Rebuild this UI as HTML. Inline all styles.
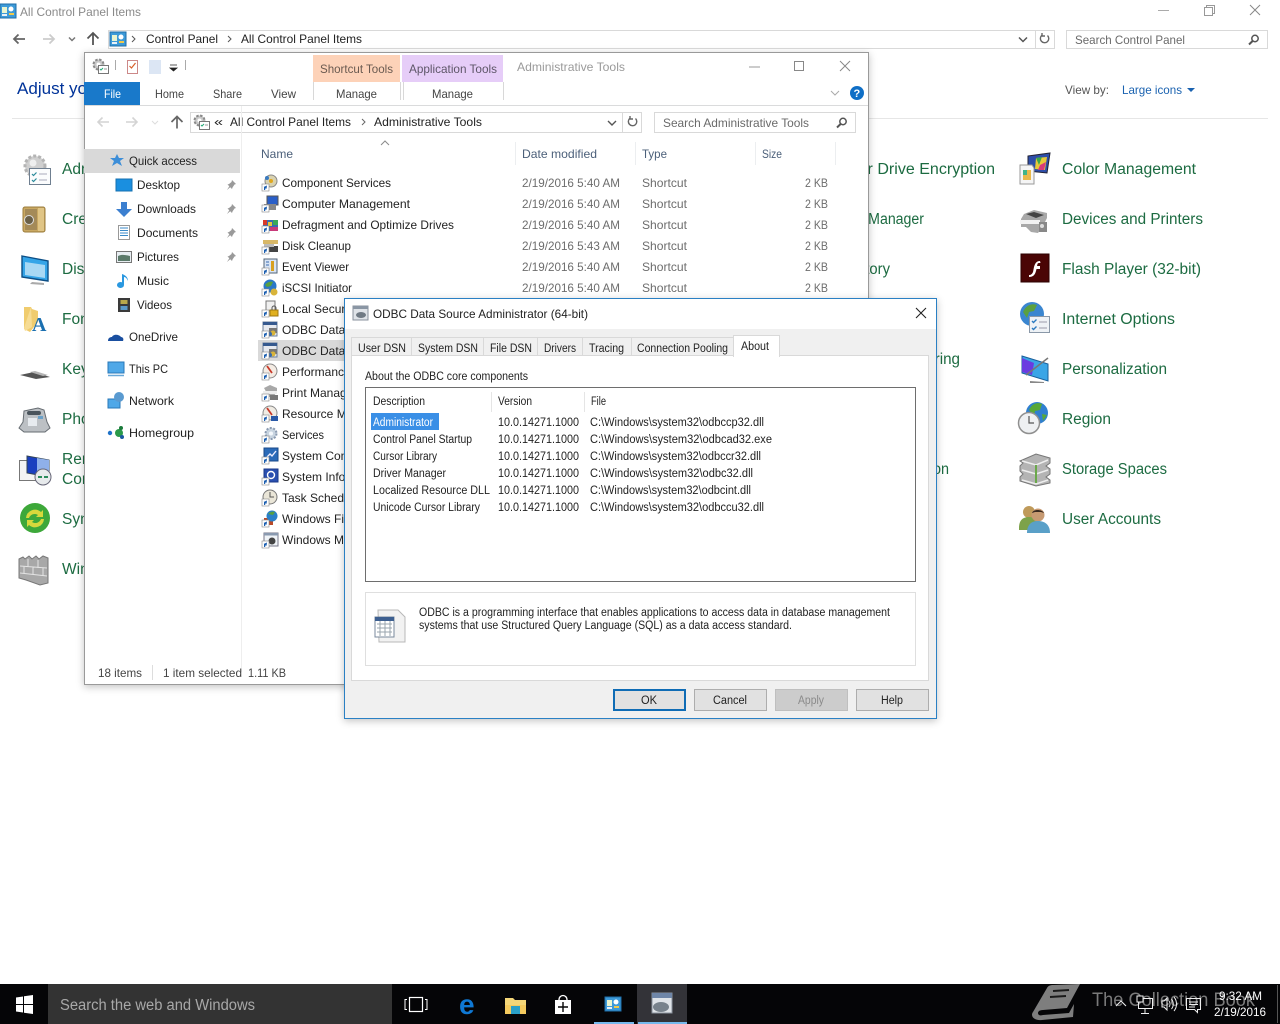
<!DOCTYPE html>
<html lang="en"><head><meta charset="utf-8"><title>ODBC Data Source Administrator</title>
<style>
html,body{margin:0;padding:0;background:#fff;width:1280px;height:1024px;overflow:hidden}
svg{display:block}
text{font-family:"Liberation Sans",Arial,sans-serif;font-size:12px;fill:#333;white-space:pre}
.l{font-size:15.5px;fill:#1c6b41}
.g{fill:#6d6d6d}
.m{font-size:12px;fill:#444}
.d{font-size:11.5px;fill:#222}
.n{fill:#222}
.h{fill:#4c607a}
.t{fill:#6a6a6a}
</style></head><body>
<svg width="1280" height="1024" viewBox="0 0 1280 1024" xmlns="http://www.w3.org/2000/svg">
<defs>
<filter id="s" x="-5%" y="-5%" width="110%" height="110%"><feDropShadow dx="0" dy="2" stdDeviation="4" flood-color="#000" flood-opacity=".24"/></filter>
<g id="sc"><rect x="0" y="9" width="7" height="7" fill="#fff" stroke="#888" stroke-width=".6"/><path d="M2 15V12H1.500L5 10.500 4.500 14 3.800 13 3 15z" fill="#1c5fb0"/></g>
<g id="cpi"><rect x="0" y="0" width="16" height="14" fill="#3d9ad8" stroke="#1f6ea8"/><rect x="2" y="3" width="5" height="6" fill="#e9f4d0"/><circle cx="11" cy="5" r="2.500" fill="#fff"/><rect x="9" y="9" width="5" height="2" fill="#f0c94a"/><rect x="2" y="10" width="5" height="2" fill="#e8f0f8"/></g>
<g id="gear16"><circle cx="6.500" cy="6.500" r="5" fill="#c8c8c8" stroke="#8a8a8a" stroke-dasharray="2.500 1.500" stroke-width="2"/><circle cx="6.500" cy="6.500" r="2" fill="#fff"/><rect x="6.500" y="7.500" width="10" height="8" fill="#fff" stroke="#777"/><path d="M8 11l1 1 2-2" stroke="#2a7" fill="none"/><path d="M12 11h3" stroke="#999"/></g>
<g id="odbc"><rect x="1" y="0" width="14" height="14" fill="#e6e9ef" stroke="#6c7f9a"/><rect x="1" y="0" width="14" height="3" fill="#35598f"/><rect x="7" y="6" width="8" height="5" fill="#777"/><circle cx="11" cy="11" r="2.500" fill="#d8b43a"/><circle cx="8" cy="12" r="2" fill="#3b6aa8"/></g>
<path id="pin" d="M5 0l4 4-1.500.5-2 3-.5 1.500-1.800-1.800L0 10l2.300-3.800L.5 4.500 2 4 4.500 2z" fill="#9a9a9a"/>
<g id="mag"><circle cx="7" cy="4.500" r="3.200" fill="none" stroke="#555" stroke-width="1.500"/><path d="M4.600 7L1 10.500" stroke="#555" stroke-width="2"/></g>
<path id="ref" d="M10.500 3.500A4.200 4.200 0 1 1 5 3.200M5 1v3h3" fill="none" stroke="#666" stroke-width="1.400"/>
</defs>

<rect width="1280" height="1024" fill="#fff"/>

<!-- Control panel window -->
<use href="#cpi" x="0" y="4"/>
<text x="20" y="16" lengthAdjust="spacingAndGlyphs" textLength="121" style="fill:#8a8a8a">All Control Panel Items</text>
<path d="M1158 10.500h11" stroke="#aaa"/>
<rect x="1206.500" y="5.500" width="8" height="8" fill="none" stroke="#999"/><rect x="1204.500" y="7.500" width="8" height="8" fill="#fff" stroke="#999"/>
<path d="M1250 5l10 10M1260 5l-10 10" stroke="#888"/>
<path d="M25 39H14M18.500 34.500L14 39l4.500 4.500" fill="none" stroke="#666" stroke-width="1.800"/>
<path d="M43 39h11M49.500 34.500L54 39l-4.500 4.500" fill="none" stroke="#ccc" stroke-width="1.800"/>
<path d="M69 37.500l3 3 3-3" fill="none" stroke="#777" stroke-width="1.500"/>
<path d="M93 45V33M87.500 38.500L93 33l5.500 5.500" fill="none" stroke="#555" stroke-width="1.800"/>
<rect x="108.500" y="30.500" width="946" height="18" fill="#fff" stroke="#d9d9d9"/>
<path d="M1035.500 31v17" stroke="#d9d9d9"/>
<use href="#cpi" x="110" y="32"/>
<path d="M132 36l3 3-3 3M228 36l3 3-3 3" fill="none" stroke="#555"/>
<text x="146" y="43" lengthAdjust="spacingAndGlyphs" textLength="72" class="n">Control Panel</text>
<text x="241" y="43" lengthAdjust="spacingAndGlyphs" textLength="121" class="n">All Control Panel Items</text>
<path d="M1019 37.500l4 4 4-4" fill="none" stroke="#555" stroke-width="1.500"/>
<use href="#ref" x="1037" y="32"/>
<rect x="1066.500" y="30.500" width="201" height="18" fill="#fff" stroke="#d9d9d9"/>
<text x="1075" y="44" lengthAdjust="spacingAndGlyphs" textLength="110" class="t">Search Control Panel</text>
<use href="#mag" x="1248" y="34"/>
<text x="17" y="94" lengthAdjust="spacingAndGlyphs" textLength="236" style="font-size:17px;fill:#003399">Adjust your computer's settings</text>
<text x="1065" y="94" lengthAdjust="spacingAndGlyphs" textLength="44" style="fill:#555">View by:</text>
<text x="1122" y="94" lengthAdjust="spacingAndGlyphs" textLength="60" style="fill:#1a62b0">Large icons</text>
<path d="M1187 88h8l-4 4z" fill="#1a62b0"/>
<path d="M12 118.500h1256" stroke="#e6e6e6"/>

<!-- Left column labels -->
<g>
<text x="62" y="174" class="l">Administrative Tools</text>
<text x="62" y="224" class="l">Credential Manager</text>
<text x="62" y="274" class="l">Display</text>
<text x="62" y="324" class="l">Fonts</text>
<text x="62" y="374" class="l">Keyboard</text>
<text x="62" y="424" class="l">Phone and Modem</text>
<text x="62" y="464" class="l">RemoteApp and Desktop</text>
<text x="62" y="484" class="l">Connections</text>
<text x="62" y="524" class="l">Sync Center</text>
<text x="62" y="574" class="l">Windows Firewall</text>
</g>
<!-- Middle column -->
<text x="806" y="174" lengthAdjust="spacingAndGlyphs" textLength="189" class="l">BitLocker Drive Encryption</text>
<text x="821" y="224" lengthAdjust="spacingAndGlyphs" textLength="103" class="l">Device Manager</text>
<text x="816" y="274" lengthAdjust="spacingAndGlyphs" textLength="74" class="l">File History</text>
<text x="818" y="364" lengthAdjust="spacingAndGlyphs" textLength="142" class="l">Network and Sharing</text>
<text x="820" y="474" lengthAdjust="spacingAndGlyphs" textLength="129" class="l">Speech Recognition</text>
<!-- Right column labels -->
<text x="1062" y="174" lengthAdjust="spacingAndGlyphs" textLength="134" class="l">Color Management</text>
<text x="1062" y="224" lengthAdjust="spacingAndGlyphs" textLength="141" class="l">Devices and Printers</text>
<text x="1062" y="274" lengthAdjust="spacingAndGlyphs" textLength="139" class="l">Flash Player (32-bit)</text>
<text x="1062" y="324" lengthAdjust="spacingAndGlyphs" textLength="113" class="l">Internet Options</text>
<text x="1062" y="374" lengthAdjust="spacingAndGlyphs" textLength="105" class="l">Personalization</text>
<text x="1062" y="424" lengthAdjust="spacingAndGlyphs" textLength="49" class="l">Region</text>
<text x="1062" y="474" lengthAdjust="spacingAndGlyphs" textLength="105" class="l">Storage Spaces</text>
<text x="1062" y="524" lengthAdjust="spacingAndGlyphs" textLength="99" class="l">User Accounts</text>

<!-- Left icons -->
<circle cx="35" cy="166" r="10" fill="#cfcfcf" stroke="#b4b4b4" stroke-dasharray="3 2" stroke-width="3"/>
<circle cx="33" cy="163" r="3.500" fill="#efefef"/>
<rect x="29.500" y="168.500" width="21" height="16" fill="#fbfcfd" stroke="#6f7f90"/>
<path d="M32 174l1.500 1.500 3-3M32 180l1.500 1.500 3-3" fill="none" stroke="#2a8a9a" stroke-width="1.200"/><path d="M39 174h8M39 180h8" stroke="#aab"/>
<rect x="23" y="207" width="22" height="25" rx="2" fill="#c9a862" stroke="#9b7c3c"/><rect x="25" y="209" width="12" height="21" fill="#a48a58"/><circle cx="29" cy="220" r="4.500" fill="#6a6048" stroke="#ddd"/><rect x="38" y="208" width="6" height="23" fill="#e0c586"/>
<path d="M22 256l26 5v20l-26-4z" fill="#35a5e8" stroke="#0d4f86" stroke-width="1.400"/><path d="M25 262l20 3v13l-20-3z" fill="#a8d8f4"/><path d="M32 282l12 1v2l-14-1z" fill="#aaa"/>
<path d="M24 307h7l1 2 6 2v11l-8 10-6-3z" fill="#f0cc6e"/><path d="M31 307l1 20-7 4-1-3z" fill="#f6dc94"/><text x="32" y="331" style="font-family:'Liberation Serif',serif;font-size:20px;font-weight:bold;fill:#1a6fb0">A</text>
<path d="M20 375l14-3 16 5-14 2z" fill="#555"/><path d="M30 372l5-1 13 4-5 1z" fill="#b5b5b5"/>
<path d="M24 411l14-3 6 2 3 12 3 6-5 4H24l-5-4 4-6z" fill="#bcc0c4" stroke="#666c72"/><rect x="27" y="411" width="14" height="4" rx="2" fill="#4a545c"/><rect x="28" y="418" width="9" height="8" fill="#e7ebef"/><rect x="38" y="416" width="5" height="3" fill="#6aa0c8"/>
<rect x="19.500" y="460.500" width="16" height="20" fill="#f4f4f4" stroke="#777"/><path d="M27 456l22 4v17l-22-4z" fill="#1a3fbf" stroke="#345"/><path d="M37 458l12 2v16l-12-2z" fill="#8fb0ea"/><circle cx="43" cy="477" r="8" fill="#e7eaec" stroke="#667"/><path d="M38 477h4M44 477h4" stroke="#2a8a5a" stroke-width="2"/>
<circle cx="35" cy="518" r="15" fill="#3da83a"/><path d="M26 518a9 9 0 0 1 15-6l2-2v7h-7l2-2a6 6 0 0 0-9 3zM44 519a9 9 0 0 1-15 6l-2 2v-7h7l-2 2a6 6 0 0 0 9-3z" fill="#d6d83c"/>
<path d="M19 559l4-2 2 2 4-3 3 3 4-3 3 3 4-3 5 2v25l-8 2-14-5-7-2z" fill="#a8a8a8" stroke="#777"/><path d="M20 566l27 2M20 573l27 3M28 559v8M38 560v8M24 566v7M33 567v8M43 568v8" stroke="#e4e4e4"/>

<!-- Right icons -->
<path d="M1028 156l22-3-3 20-19-2z" fill="#2d4ea8" stroke="#223"/><path d="M1036 158l11-1-2 13-10-1z" fill="#e8c83a"/><path d="M1036 158l6-1-3 8z" fill="#3ca848"/><path d="M1040 165l6-3-2 8-6 0z" fill="#d83a7a"/>
<path d="M1020 165h12l2 3v16h-14z" fill="#f5f5f5" stroke="#999"/><rect x="1023" y="170" width="8" height="10" fill="#e8b84a"/><rect x="1023" y="170" width="4" height="5" fill="#3fb58a"/>
<path d="M1024 214l10-4 13 3v5l-5 10-4 5-7-1-5-5h-5v-8z" fill="#a8a8a8"/><path d="M1026 214l8-2 10 3-8 3z" fill="#444"/><rect x="1020" y="220" width="20" height="4" fill="#f2f2f2"/><rect x="1039" y="222" width="8" height="10" fill="#888"/><circle cx="1042" cy="226" r="2" fill="#ddd"/>
<rect x="1021" y="254" width="28" height="28" fill="#4a0505" stroke="#2c0202"/><path d="M1040 261c-4 0-5 3-6 6l-1 5c-1 2-2 3-4 3v2c4 0 6-2 7-6l.5-2h3.500v-3h-3l.5-2c.4-1 1-1 3-1z" fill="#fff"/>
<circle cx="1032" cy="314" r="12" fill="#3a86d0"/><path d="M1023 312c3-7 9-9 14-7l-3 6-5 1-2 6zM1036 316l5 3-5 5z" fill="#5aa040"/>
<rect x="1029.500" y="316.500" width="20" height="16" fill="#eef2f6" stroke="#8a98a8"/><path d="M1032 321l1.500 1.500 3-3M1032 328l1.500 1.500 3-3" fill="none" stroke="#2a7ac0" stroke-width="1.400"/><path d="M1039 322h8M1039 328h8" stroke="#99a"/>
<path d="M1022 356l26 8v17l-26-8z" fill="#3aa5e6" stroke="#1a5f9a"/><path d="M1022 358l12 5-2 12-10-3z" fill="#6a3be0"/><path d="M1026 375l22-17" stroke="#777" stroke-width="1.500"/><path d="M1030 381l14 1v1l-14 0z" fill="#888"/>
<circle cx="1037" cy="413" r="11" fill="#2f7fd0"/><path d="M1029 410c3-7 9-8 13-6l-2 6-5 1-1 5zM1042 414l5 1-4 6z" fill="#58a838"/>
<circle cx="1029" cy="423" r="10.500" fill="#eef0f2" stroke="#8f8f8f" stroke-width="1.500"/><path d="M1029 416v7h5" fill="none" stroke="#555" stroke-width="1.200"/>
<path d="M1020 461l16-7 14 4v5l-4 3 4 3v5l-4 3 4 3v3l-14 3-16-5v-4l3-3-3-3v-5l3-3z" fill="#b4b4b4" stroke="#777"/><path d="M1022 470l14 4 12-4M1022 480l14 4 12-4M1022 461l14 4 12-5" fill="none" stroke="#eee" stroke-width="1.500"/><path d="M1036 465v18" stroke="#6aa84a" stroke-width="2"/>
<circle cx="1029" cy="512" r="6" fill="#bf9a5a"/><path d="M1019 528c0-8 4-11 10-11s8 3 8 8v5h-18z" fill="#7da24a"/><circle cx="1038" cy="515" r="6.500" fill="#c79a72"/><path d="M1032 513c1-4 10-4 12 0l-3-1h-6z" fill="#3a2a20"/><path d="M1027 533c0-9 5-12 11-12s12 3 12 12z" fill="#5aa0c8"/>

<!-- Explorer window -->
<rect x="84.500" y="52.500" width="784" height="632" fill="#fff" stroke="#9a9a9a" filter="url(#s)"/>
<use href="#gear16" x="92" y="58"/>
<path d="M115.500 60v10M185.500 60v10" stroke="#aaa"/>
<rect x="127.500" y="60.500" width="10" height="13" fill="#fff" stroke="#c88"/><path d="M129.500 66l2 2 4-5" fill="none" stroke="#d8602a" stroke-width="1.200"/>
<rect x="149" y="60" width="12" height="14" fill="#dce6f4"/>
<path d="M170 65h7M170 68h7l-3.500 3z" fill="#222" stroke="#222" stroke-width=".8"/>
<rect x="313" y="55" width="87" height="27" fill="#fdd2b8"/>
<rect x="402" y="55" width="101" height="27" fill="#e6cdf8"/>
<text x="320" y="73" lengthAdjust="spacingAndGlyphs" textLength="73" class="m" style="fill:#6a5a50">Shortcut Tools</text>
<text x="409" y="73" lengthAdjust="spacingAndGlyphs" textLength="88" class="m" style="fill:#5e5668">Application Tools</text>
<text x="517" y="71" lengthAdjust="spacingAndGlyphs" textLength="108" class="m" style="fill:#9a9a9a">Administrative Tools</text>
<path d="M749 67h11" stroke="#999"/>
<rect x="794.500" y="61.500" width="9" height="9" fill="none" stroke="#888"/>
<path d="M840 61l10 10M850 61l-10 10" stroke="#888"/>
<rect x="84" y="82" width="56" height="23" fill="#1979ca"/>
<text x="104" y="98" lengthAdjust="spacingAndGlyphs" textLength="17" style="fill:#fff">File</text>
<text x="155" y="98" lengthAdjust="spacingAndGlyphs" textLength="29" class="m">Home</text>
<text x="213" y="98" lengthAdjust="spacingAndGlyphs" textLength="29" class="m">Share</text>
<text x="271" y="98" lengthAdjust="spacingAndGlyphs" textLength="25" class="m">View</text>
<text x="336" y="98" lengthAdjust="spacingAndGlyphs" textLength="41" class="m">Manage</text>
<text x="432" y="98" lengthAdjust="spacingAndGlyphs" textLength="41" class="m">Manage</text>
<path d="M313.500 82v18M400.500 82v18M403.500 82v18M503.500 82v18" stroke="#d8d8d8"/>
<path d="M85 105.500h783" stroke="#dadbdc"/>
<path d="M831 91l4 4 4-4" fill="none" stroke="#aaa"/>
<circle cx="857" cy="93" r="7" fill="#0f6fc6"/><text x="853.500" y="97" style="fill:#fff;font-weight:bold;font-size:11px">?</text>
<path d="M109 122H98M102.500 117.500L98 122l4.500 4.500" fill="none" stroke="#d4d4d4" stroke-width="1.600"/>
<path d="M126 122h11M132.500 117.500L137 122l-4.500 4.500" fill="none" stroke="#d4d4d4" stroke-width="1.600"/>
<path d="M152 121l3 3 3-3" fill="none" stroke="#ddd"/>
<path d="M177 128.500V116.500M171.500 122L177 116.500l5.500 5.500" fill="none" stroke="#666" stroke-width="1.700"/>
<rect x="190.500" y="112.500" width="451" height="20" fill="#fff" stroke="#d9d9d9"/>
<path d="M622.500 113v19" stroke="#d9d9d9"/>
<use href="#gear16" x="193" y="114"/>
<text x="214" y="126" lengthAdjust="spacingAndGlyphs" textLength="9" class="n">«</text>
<text x="230" y="126" lengthAdjust="spacingAndGlyphs" textLength="121" class="n">All Control Panel Items</text>
<path d="M362 119l3 3-3 3" fill="none" stroke="#666"/>
<text x="374" y="126" lengthAdjust="spacingAndGlyphs" textLength="108" class="n">Administrative Tools</text>
<path d="M608 121l4 4 4-4" fill="none" stroke="#555" stroke-width="1.400"/>
<use href="#ref" x="625" y="115"/>
<rect x="654.500" y="112.500" width="201" height="20" fill="#fff" stroke="#d9d9d9"/>
<text x="663" y="127" lengthAdjust="spacingAndGlyphs" textLength="146" class="t">Search Administrative Tools</text>
<use href="#mag" x="836" y="117"/>

<!-- Sidebar -->
<path d="M241.500 106v566" stroke="#eeeeee"/>
<rect x="84" y="149" width="156" height="24" fill="#d9d9d9"/>
<path d="M117 154l2 4h5l-4 3 2 5-5-3-5 3 2-5-4-3h5z" fill="#3d8ed8"/>
<text x="129" y="165" lengthAdjust="spacingAndGlyphs" textLength="68" class="n">Quick access</text>
<rect x="116" y="179" width="16" height="12" fill="#1a8fe0" stroke="#1570b0"/>
<text x="137" y="189" lengthAdjust="spacingAndGlyphs" textLength="43" class="n">Desktop</text><use href="#pin" x="227" y="180"/>
<path d="M121 202h6v7h5l-8 8-8-8h5z" fill="#3b7fd0"/>
<text x="137" y="213" lengthAdjust="spacingAndGlyphs" textLength="59" class="n">Downloads</text><use href="#pin" x="227" y="204"/>
<rect x="118.500" y="225.500" width="11" height="14" fill="#fff" stroke="#999"/><path d="M120 228h8M120 230.500h8M120 233h8M120 235.500h8" stroke="#3a8ac8"/>
<text x="137" y="237" lengthAdjust="spacingAndGlyphs" textLength="61" class="n">Documents</text><use href="#pin" x="227" y="228"/>
<rect x="116.500" y="251.500" width="15" height="11" fill="#e8eef2" stroke="#777"/><path d="M118 256c4-2 8-1 12 0v5h-12z" fill="#5b7a6a"/>
<text x="137" y="261" lengthAdjust="spacingAndGlyphs" textLength="42" class="n">Pictures</text><use href="#pin" x="227" y="252"/>
<path d="M124 274v11a3.500 3 0 1 1-2-2.700V274c3 1 6 3 6 7-1-2-2-4-4-4z" fill="#2a98e0"/>
<text x="137" y="285" lengthAdjust="spacingAndGlyphs" textLength="32" class="n">Music</text>
<rect x="118" y="298" width="12" height="14" fill="#3a3a3a"/><rect x="120.500" y="300" width="7" height="4" fill="#b8a84a"/><rect x="120.500" y="306" width="7" height="4" fill="#5a9ac8"/>
<text x="137" y="309" lengthAdjust="spacingAndGlyphs" textLength="35" class="n">Videos</text>
<path d="M108 341c0-3 2-4 4-4 1-3 7-3 9 0 2 0 3 2 2 4z" fill="#1a4fa0"/>
<text x="129" y="341" lengthAdjust="spacingAndGlyphs" textLength="49" class="n">OneDrive</text>
<rect x="108" y="362" width="16" height="11" fill="#4fa8e8" stroke="#2a78b8"/><path d="M108 375.500h16" stroke="#6aa8d8" stroke-width="1.500"/>
<text x="129" y="373" lengthAdjust="spacingAndGlyphs" textLength="39" class="n">This PC</text>
<rect x="108" y="399" width="12" height="9" fill="#4fa8e8" stroke="#2a78b8"/><circle cx="119" cy="397" r="5" fill="#5a9ad0"/>
<text x="129" y="405" lengthAdjust="spacingAndGlyphs" textLength="45" class="n">Network</text>
<circle cx="110" cy="433" r="2.200" fill="#1f72c8"/><circle cx="119" cy="433" r="4" fill="#2a9a4a"/><circle cx="121" cy="428" r="2" fill="#1a7a3a"/><circle cx="122" cy="437" r="2" fill="#1a5aa0"/>
<text x="129" y="437" lengthAdjust="spacingAndGlyphs" textLength="65" class="n">Homegroup</text>

<!-- Column headers -->
<text x="261" y="158" lengthAdjust="spacingAndGlyphs" textLength="32" class="h">Name</text>
<text x="522" y="158" lengthAdjust="spacingAndGlyphs" textLength="75" class="h">Date modified</text>
<text x="642" y="158" lengthAdjust="spacingAndGlyphs" textLength="25" class="h">Type</text>
<text x="762" y="158" lengthAdjust="spacingAndGlyphs" textLength="20" class="h">Size</text>
<path d="M381 145l4-4 4 4" fill="none" stroke="#8a8a8a"/>
<path d="M515.500 142v23M635.500 142v23M755.500 142v23M835.500 142v23" stroke="#eceef0"/>

<rect x="258" y="340" width="90" height="21" fill="#d9d9d9"/>
<!-- list rows -->
<g>
<text x="282" y="187" lengthAdjust="spacingAndGlyphs" textLength="109" class="n">Component Services</text>
<text x="282" y="208" lengthAdjust="spacingAndGlyphs" textLength="128" class="n">Computer Management</text>
<text x="282" y="229" lengthAdjust="spacingAndGlyphs" textLength="172" class="n">Defragment and Optimize Drives</text>
<text x="282" y="250" lengthAdjust="spacingAndGlyphs" textLength="69" class="n">Disk Cleanup</text>
<text x="282" y="271" lengthAdjust="spacingAndGlyphs" textLength="67" class="n">Event Viewer</text>
<text x="282" y="292" lengthAdjust="spacingAndGlyphs" textLength="70" class="n">iSCSI Initiator</text>
<text x="282" y="313" class="n">Local Security Policy</text>
<text x="282" y="334" class="n">ODBC Data Sources (32-bit)</text>
<text x="282" y="355" class="n">ODBC Data Sources (64-bit)</text>
<text x="282" y="376" class="n">Performance Monitor</text>
<text x="282" y="397" class="n">Print Management</text>
<text x="282" y="418" class="n">Resource Monitor</text>
<text x="282" y="439" lengthAdjust="spacingAndGlyphs" textLength="42" class="n">Services</text>
<text x="282" y="460" class="n">System Configuration</text>
<text x="282" y="481" class="n">System Information</text>
<text x="282" y="502" class="n">Task Scheduler</text>
<text x="282" y="523" class="n">Windows Firewall with Advanced Security</text>
<text x="282" y="544" class="n">Windows Memory Diagnostic</text>
</g>
<g>
<text x="522" y="187" lengthAdjust="spacingAndGlyphs" textLength="98" class="g">2/19/2016 5:40 AM</text><text x="642" y="187" lengthAdjust="spacingAndGlyphs" textLength="45" class="g">Shortcut</text><text x="805" y="187" lengthAdjust="spacingAndGlyphs" textLength="23" class="g">2 KB</text>
<text x="522" y="208" lengthAdjust="spacingAndGlyphs" textLength="98" class="g">2/19/2016 5:40 AM</text><text x="642" y="208" lengthAdjust="spacingAndGlyphs" textLength="45" class="g">Shortcut</text><text x="805" y="208" lengthAdjust="spacingAndGlyphs" textLength="23" class="g">2 KB</text>
<text x="522" y="229" lengthAdjust="spacingAndGlyphs" textLength="98" class="g">2/19/2016 5:40 AM</text><text x="642" y="229" lengthAdjust="spacingAndGlyphs" textLength="45" class="g">Shortcut</text><text x="805" y="229" lengthAdjust="spacingAndGlyphs" textLength="23" class="g">2 KB</text>
<text x="522" y="250" lengthAdjust="spacingAndGlyphs" textLength="98" class="g">2/19/2016 5:43 AM</text><text x="642" y="250" lengthAdjust="spacingAndGlyphs" textLength="45" class="g">Shortcut</text><text x="805" y="250" lengthAdjust="spacingAndGlyphs" textLength="23" class="g">2 KB</text>
<text x="522" y="271" lengthAdjust="spacingAndGlyphs" textLength="98" class="g">2/19/2016 5:40 AM</text><text x="642" y="271" lengthAdjust="spacingAndGlyphs" textLength="45" class="g">Shortcut</text><text x="805" y="271" lengthAdjust="spacingAndGlyphs" textLength="23" class="g">2 KB</text>
<text x="522" y="292" lengthAdjust="spacingAndGlyphs" textLength="98" class="g">2/19/2016 5:40 AM</text><text x="642" y="292" lengthAdjust="spacingAndGlyphs" textLength="45" class="g">Shortcut</text><text x="805" y="292" lengthAdjust="spacingAndGlyphs" textLength="23" class="g">2 KB</text>
</g>
<!-- small list icons -->
<g transform="translate(262,175)"><circle cx="9" cy="6" r="6" fill="#d9d2b0" stroke="#888"/><circle cx="9" cy="6" r="2" fill="#e0a820"/><circle cx="5" cy="3" r="2" fill="#3a7ac0"/><use href="#sc"/></g>
<g transform="translate(262,196)"><rect x="5" y="0" width="11" height="9" fill="#2a5fc8" stroke="#555"/><rect x="2" y="8" width="12" height="6" fill="#888"/><use href="#sc"/></g>
<g transform="translate(262,217)"><rect x="1" y="3" width="15" height="11" fill="#3a6ab0"/><rect x="1" y="3" width="4" height="5" fill="#d83a2a"/><rect x="6" y="5" width="4" height="4" fill="#e8c83a"/><rect x="11" y="3" width="5" height="5" fill="#3aa858"/><rect x="8" y="10" width="8" height="4" fill="#c83a7a"/><use href="#sc"/></g>
<g transform="translate(262,238)"><rect x="1" y="2" width="15" height="4" fill="#d8b868"/><rect x="7" y="8" width="9" height="6" fill="#444"/><rect x="2" y="6" width="10" height="3" fill="#bbb"/><use href="#sc"/></g>
<g transform="translate(262,259)"><rect x="2" y="0" width="13" height="14" fill="#d8e4f4" stroke="#567"/><path d="M9 2h3v10H9z" fill="#d8a020"/><path d="M4 3h3M4 6h3" stroke="#3a6ab0"/><use href="#sc"/></g>
<g transform="translate(262,280)"><circle cx="8" cy="6" r="6.500" fill="#2a78c8"/><path d="M3 5c2-3 6-4 8-3l-2 4-4 1z" fill="#58a040"/><circle cx="12" cy="12" r="3.500" fill="#d8b43a"/><use href="#sc"/></g>
<g transform="translate(262,301)"><rect x="4" y="0" width="9" height="10" fill="#f0f0f0" stroke="#777"/><rect x="8" y="9" width="8" height="6" fill="#e0b020" stroke="#a07810"/><path d="M10 9V7a2 2 0 0 1 4 0v2" fill="none" stroke="#555"/><use href="#sc"/></g>
<g transform="translate(262,322)"><use href="#odbc"/><use href="#sc"/></g>
<g transform="translate(262,343)"><use href="#odbc"/><use href="#sc"/></g>
<g transform="translate(262,364)"><circle cx="8" cy="7" r="7" fill="#f4ece4" stroke="#8a8a8a"/><path d="M5 2l5 7" stroke="#c83a2a" stroke-width="1.800"/><use href="#sc"/></g>
<g transform="translate(262,385)"><path d="M2 3l6-3 7 3v4l-4 5H7z" fill="#a8a8a8"/><rect x="1" y="6" width="14" height="3" fill="#eee"/><rect x="8" y="10" width="8" height="5" fill="#777"/><use href="#sc"/></g>
<g transform="translate(262,406)"><circle cx="8" cy="7" r="7" fill="#f0ece4" stroke="#8a8a8a"/><path d="M5 2l5 7" stroke="#c83a2a" stroke-width="1.800"/><rect x="9" y="10" width="7" height="5" fill="#2a5aa8"/><use href="#sc"/></g>
<g transform="translate(262,427)"><circle cx="9" cy="6.500" r="5.500" fill="#c8d4e0" stroke="#8a9ab0" stroke-dasharray="2 1.500" stroke-width="2"/><circle cx="9" cy="6.500" r="2" fill="#f4f8fc"/><use href="#sc"/></g>
<g transform="translate(262,448)"><rect x="2" y="0" width="14" height="13" fill="#2a6ab8" stroke="#1a4a88"/><path d="M5 9l3-3 2 2 4-5" stroke="#eef" fill="none" stroke-width="1.400"/><use href="#sc"/></g>
<g transform="translate(262,469)"><rect x="2" y="0" width="14" height="13" fill="#2a4fb0" stroke="#1a3a88"/><circle cx="9" cy="6" r="3.500" fill="none" stroke="#fff" stroke-width="1.400"/><use href="#sc"/></g>
<g transform="translate(262,490)"><circle cx="8" cy="7" r="7" fill="#eae6d8" stroke="#777"/><path d="M8 2v5h4" fill="none" stroke="#555"/><use href="#sc"/></g>
<g transform="translate(262,511)"><rect x="2" y="7" width="9" height="7" fill="#b84a2a"/><circle cx="10" cy="5" r="5.500" fill="#2a80c8"/><path d="M6 3c2-2 5-3 7-2l-2 3z" fill="#58a040"/><use href="#sc"/></g>
<g transform="translate(262,532)"><rect x="2" y="1" width="14" height="13" fill="#f0f4f8" stroke="#778"/><rect x="2" y="1" width="14" height="2.500" fill="#8a9ab0"/><circle cx="10" cy="9" r="3.500" fill="#444"/><use href="#sc"/></g>

<!-- Status bar -->
<text x="98" y="677" lengthAdjust="spacingAndGlyphs" textLength="44" class="m">18 items</text>
<path d="M152.500 665v15" stroke="#ddd"/>
<text x="163" y="677" lengthAdjust="spacingAndGlyphs" textLength="79" class="m">1 item selected</text>
<text x="248" y="677" lengthAdjust="spacingAndGlyphs" textLength="38" class="m">1.11 KB</text>

<!-- Dialog -->
<rect x="344.500" y="298.500" width="592" height="420" fill="#f0f0f0" stroke="#2a80c4" filter="url(#s)"/>
<rect x="345" y="299" width="591" height="30" fill="#fff"/>
<rect x="353" y="306" width="15" height="14" fill="#dfe3e8" stroke="#8a929c"/><rect x="353" y="306" width="15" height="3" fill="#8a96a4"/><ellipse cx="361" cy="315" rx="5" ry="3" fill="#707a84"/>
<text x="373" y="318" lengthAdjust="spacingAndGlyphs" textLength="215" class="n">ODBC Data Source Administrator (64-bit)</text>
<path d="M916 308l10 10M926 308l-10 10" stroke="#222" stroke-width="1.100"/>

<!-- tabs -->
<g fill="#f0f0f0" stroke="#d9d9d9">
<rect x="351.500" y="337.500" width="60" height="18"/>
<rect x="411.500" y="337.500" width="72" height="18"/>
<rect x="483.500" y="337.500" width="54" height="18"/>
<rect x="537.500" y="337.500" width="45" height="18"/>
<rect x="582.500" y="337.500" width="49" height="18"/>
<rect x="631.500" y="337.500" width="102" height="18"/>
</g>
<rect x="351.500" y="355.500" width="577" height="325" fill="#fff" stroke="#d9d9d9"/>
<rect x="733.500" y="335.500" width="46" height="21" fill="#fff" stroke="#d9d9d9"/>
<rect x="734" y="354" width="45" height="3" fill="#fff"/>
<text x="358" y="352" lengthAdjust="spacingAndGlyphs" textLength="48" class="d">User DSN</text>
<text x="418" y="352" lengthAdjust="spacingAndGlyphs" textLength="60" class="d">System DSN</text>
<text x="490" y="352" lengthAdjust="spacingAndGlyphs" textLength="42" class="d">File DSN</text>
<text x="544" y="352" lengthAdjust="spacingAndGlyphs" textLength="32" class="d">Drivers</text>
<text x="589" y="352" lengthAdjust="spacingAndGlyphs" textLength="35" class="d">Tracing</text>
<text x="637" y="352" lengthAdjust="spacingAndGlyphs" textLength="91" class="d">Connection Pooling</text>
<text x="741" y="350" lengthAdjust="spacingAndGlyphs" textLength="28" class="d">About</text>
<text x="365" y="380" lengthAdjust="spacingAndGlyphs" textLength="163" class="d">About the ODBC core components</text>

<rect x="365.500" y="387.500" width="550" height="194" fill="#fff" stroke="#6e6e6e"/>
<path d="M491.500 392v20M584.500 392v20" stroke="#e5e5e5"/>
<text x="373" y="405" lengthAdjust="spacingAndGlyphs" textLength="52" class="d">Description</text>
<text x="498" y="405" lengthAdjust="spacingAndGlyphs" textLength="34" class="d">Version</text>
<text x="591" y="405" lengthAdjust="spacingAndGlyphs" textLength="15" class="d">File</text>
<rect x="371" y="413" width="68" height="17" fill="#3a8fe6"/>
<text x="373" y="426" lengthAdjust="spacingAndGlyphs" textLength="60" class="d" style="fill:#fff">Administrator</text>
<text x="373" y="443" lengthAdjust="spacingAndGlyphs" textLength="99" class="d">Control Panel Startup</text>
<text x="373" y="460" lengthAdjust="spacingAndGlyphs" textLength="64" class="d">Cursor Library</text>
<text x="373" y="477" lengthAdjust="spacingAndGlyphs" textLength="73" class="d">Driver Manager</text>
<text x="373" y="494" lengthAdjust="spacingAndGlyphs" textLength="117" class="d">Localized Resource DLL</text>
<text x="373" y="511" lengthAdjust="spacingAndGlyphs" textLength="107" class="d">Unicode Cursor Library</text>
<text x="498" y="426" lengthAdjust="spacingAndGlyphs" textLength="81" class="d">10.0.14271.1000</text>
<text x="498" y="443" lengthAdjust="spacingAndGlyphs" textLength="81" class="d">10.0.14271.1000</text>
<text x="498" y="460" lengthAdjust="spacingAndGlyphs" textLength="81" class="d">10.0.14271.1000</text>
<text x="498" y="477" lengthAdjust="spacingAndGlyphs" textLength="81" class="d">10.0.14271.1000</text>
<text x="498" y="494" lengthAdjust="spacingAndGlyphs" textLength="81" class="d">10.0.14271.1000</text>
<text x="498" y="511" lengthAdjust="spacingAndGlyphs" textLength="81" class="d">10.0.14271.1000</text>
<text x="590" y="426" lengthAdjust="spacingAndGlyphs" textLength="174" class="d">C:\Windows\system32\odbccp32.dll</text>
<text x="590" y="443" lengthAdjust="spacingAndGlyphs" textLength="182" class="d">C:\Windows\system32\odbcad32.exe</text>
<text x="590" y="460" lengthAdjust="spacingAndGlyphs" textLength="171" class="d">C:\Windows\system32\odbccr32.dll</text>
<text x="590" y="477" lengthAdjust="spacingAndGlyphs" textLength="163" class="d">C:\Windows\system32\odbc32.dll</text>
<text x="590" y="494" lengthAdjust="spacingAndGlyphs" textLength="161" class="d">C:\Windows\system32\odbcint.dll</text>
<text x="590" y="511" lengthAdjust="spacingAndGlyphs" textLength="174" class="d">C:\Windows\system32\odbccu32.dll</text>

<rect x="365.500" y="592.500" width="550" height="73" fill="#fff" stroke="#dfdfdf"/>
<path d="M378 610h20l7 7v25h-26z" fill="#f2f2f2" stroke="#b8b8b8"/><rect x="375" y="617" width="19" height="20" fill="#fff" stroke="#7a8a9c"/><rect x="375" y="617" width="19" height="4" fill="#3d5f90"/><path d="M377 624h15M377 628h15M377 632h15M380 621v15M385 621v15M390 621v15" stroke="#9aa4ae"/>
<text x="419" y="616" lengthAdjust="spacingAndGlyphs" textLength="471" class="d">ODBC is a programming interface that enables applications to access data in database management</text>
<text x="419" y="629" lengthAdjust="spacingAndGlyphs" textLength="373" class="d">systems that use Structured Query Language (SQL) as a data access standard.</text>

<rect x="614" y="690" width="71" height="20" fill="#e1e1e1" stroke="#0f6cb5" stroke-width="2"/>
<rect x="694.500" y="689.500" width="72" height="21" fill="#e1e1e1" stroke="#adadad"/>
<rect x="775.500" y="689.500" width="72" height="21" fill="#cccccc" stroke="#bfbfbf"/>
<rect x="856.500" y="689.500" width="72" height="21" fill="#e1e1e1" stroke="#adadad"/>
<text x="641" y="704" lengthAdjust="spacingAndGlyphs" textLength="16" class="d">OK</text>
<text x="713" y="704" lengthAdjust="spacingAndGlyphs" textLength="34" class="d">Cancel</text>
<text x="798" y="704" lengthAdjust="spacingAndGlyphs" textLength="26" class="d" style="fill:#8a8a8a">Apply</text>
<text x="881" y="704" lengthAdjust="spacingAndGlyphs" textLength="22" class="d">Help</text>

<!-- Taskbar -->
<rect x="0" y="984" width="1280" height="40" fill="#050507"/>
<path d="M16 997.500l7-1v7.500h-7zM24 996.300l9-1.300v9h-9zM16 1005h7v7.500l-7-1zM24 1005h9v9l-9-1.300z" fill="#fff"/>
<rect x="48" y="984" width="344" height="40" fill="#333333"/>
<text x="60" y="1010" lengthAdjust="spacingAndGlyphs" textLength="195" style="font-size:15.5px;fill:#a8a8a8">Search the web and Windows</text>
<rect x="409.500" y="997.500" width="13" height="14" fill="none" stroke="#fff" stroke-width="1.200"/>
<path d="M407 999.500h-2v10h2M425 999.500h2v10h-2" fill="none" stroke="#fff" stroke-width="1"/>
<text x="459" y="1014" style="font-size:28px;font-weight:bold;fill:#0f78d4">e</text>
<path d="M505 998h8l2 2h11v14h-21z" fill="#f4d678"/><rect x="505" y="1005" width="21" height="9" fill="#f4ca5e"/><rect x="511" y="1006" width="9" height="8" fill="#2aa0c8"/>
<rect x="555" y="1000" width="16" height="14" fill="#fff"/><path d="M559 1000c0-6 8-6 8 0" fill="none" stroke="#fff" stroke-width="1.300"/><path d="M563 1002v10M558 1007h10" stroke="#050507" stroke-width="1.400"/>
<rect x="594" y="1022" width="40" height="2" fill="#76b9ed"/>
<rect x="637" y="984" width="50" height="40" fill="#333338"/>
<rect x="638" y="1022" width="49" height="2" fill="#76b9ed"/>
<use href="#cpi" x="605" y="997"/>
<rect x="652" y="993" width="20" height="20" fill="#dfe3e8" stroke="#8a929c"/><rect x="652" y="993" width="20" height="5" fill="#6f86a8"/><ellipse cx="661" cy="1007" rx="8" ry="5" fill="#78828c"/>
<!-- Watermark -->
<path d="M1033 1012l14-24c1-2 3-3 6-3l27-1-13 24-24 2c-4 0-5 2-5 3 0 2 2 3 5 2l26-2 5-9-1 13-31 3c-8 1-12-4-9-8z" fill="#7e7e7e"/>
<path d="M1053 991l16-1M1050 997l16-1" stroke="#1a1a1a" stroke-width="2"/>
<text x="1092" y="1006" lengthAdjust="spacingAndGlyphs" textLength="163" style="font-size:19px;fill:#7a7a7a">The Collection Book</text>
<path d="M1116 1006l5-5 5 5" fill="none" stroke="#eee" stroke-width="1.100"/>
<rect x="1138.500" y="998.500" width="14" height="10" fill="none" stroke="#eee"/><path d="M1145 1009v4M1141 1013.500h8" stroke="#eee"/><rect x="1137" y="996" width="6" height="6" fill="#050507" stroke="#eee"/>
<path d="M1162 1001h2l3-3v12l-3-3h-2z" fill="none" stroke="#eee"/><path d="M1169 1001a5 5 0 0 1 0 6M1171.500 999a8 8 0 0 1 0 10M1174 997a11 11 0 0 1 0 14" fill="none" stroke="#eee"/>
<path d="M1186.500 998.500h14v11h-3v3l-3-3h-8z" fill="none" stroke="#eee"/><path d="M1189 1002h9M1189 1004.500h9M1189 1007h6" stroke="#eee"/>
<text x="1219" y="1000" lengthAdjust="spacingAndGlyphs" textLength="43" style="font-size:12px;fill:#fff">9:32 AM</text>
<text x="1214" y="1016" lengthAdjust="spacingAndGlyphs" textLength="52" style="font-size:12px;fill:#fff">2/19/2016</text>
<path d="M1277.500 985v38" stroke="#555"/>
</svg>
</body></html>
